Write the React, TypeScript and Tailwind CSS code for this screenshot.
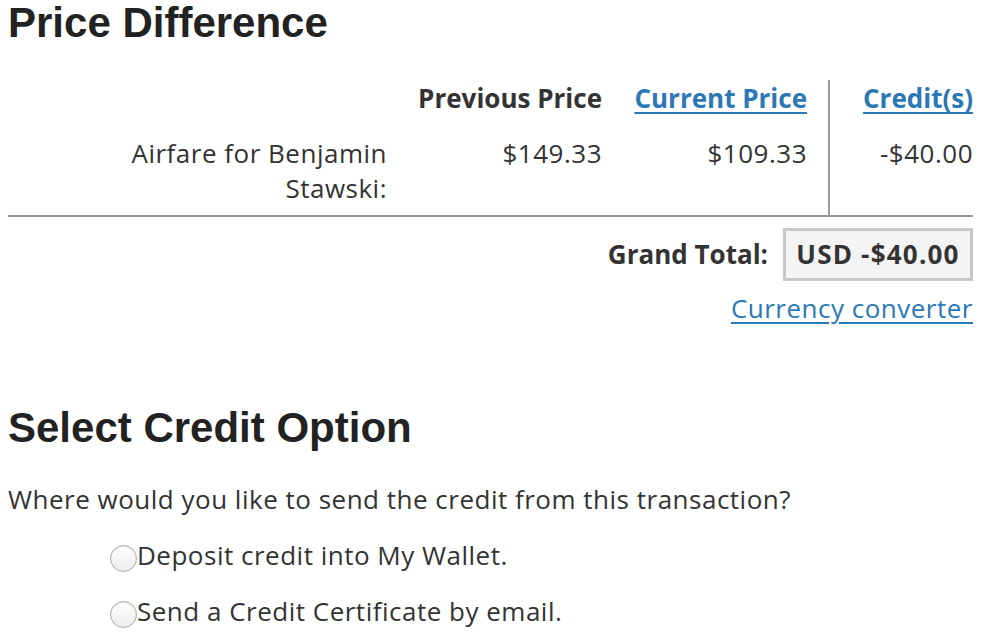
import React from "react";

const body = "font-['Open_Sans','Noto_Sans',sans-serif]";
const heading = "font-['Liberation_Sans',Arial,sans-serif] font-bold text-[42px] leading-[46px] text-[#222]";
const link = "text-[#2b78b6] underline underline-offset-[4px] decoration-[2px]";
const reg = "tracking-[0.5px]";

function RadioOption({ label }: { label: string }) {
  return (
    <label className="flex items-center pl-[102px] h-[56px]">
      <span className="w-[27px] h-[27px] rounded-full border border-[#a8a8a8] bg-gradient-to-b from-white to-[#ededed] shadow-[inset_0_1px_2px_rgba(0,0,0,0.1)] shrink-0 mt-[6px]" />
      <span className={`text-[26px] leading-[35px] text-[#333] ${reg}`}>{label}</span>
    </label>
  );
}

function PriceTable() {
  return (
    <div className="text-[26px] leading-[35px] text-[#333]">
      <div className="flex">
        <div className="w-[387px] pt-[1px] pb-[20px]" />
        <div className="w-[215px] pr-[8px] pt-[1px] pb-[20px] text-right font-bold">
          Previous Price
        </div>
        <div className="w-[218px] pr-[21px] pt-[1px] pb-[20px] text-right font-bold">
          <a className={link}>Current Price</a>
        </div>
        <div className="flex-1 border-l-2 border-[#999] pt-[1px] pb-[20px] text-right font-bold">
          <a className={link}>Credit(s)</a>
        </div>
      </div>
      <div className={`flex border-b-2 border-[#999] ${reg}`}>
        <div className="w-[387px] pl-[110px] pr-[8px] pb-[9px] text-right">
          Airfare for Benjamin Stawski:
        </div>
        <div className="w-[215px] pr-[8px] text-right">$149.33</div>
        <div className="w-[218px] pr-[21px] text-right">$109.33</div>
        <div className="flex-1 border-l-2 border-[#999] text-right">-$40.00</div>
      </div>
      <div className="flex justify-end items-center gap-[15px] mt-[11px]">
        <span className="font-bold">Grand Total:</span>
        <span className="w-[190px] border-[3px] border-[#c8c8c8] bg-[#f4f4f4] font-bold tracking-[1.2px] text-center py-[6px]">
          USD -$40.00
        </span>
      </div>
      <div className="flex justify-end mt-[10px]">
        <a className={`${link} ${reg}`}>Currency converter</a>
      </div>
    </div>
  );
}

export default function App() {
  return (
    <div className={`${body} bg-white w-[984px] h-[632px] overflow-hidden pl-[8px] pr-[11px]`}>
      <h1 className={`${heading} pt-[0px]`}>Price Difference</h1>
      <div className="mt-[34px]">
        <PriceTable />
      </div>
      <h2 className={`${heading} mt-[79px]`}>Select Credit Option</h2>
      <p className={`text-[26px] leading-[35px] text-[#333] mt-[31px] ${reg}`}>
        Where would you like to send the credit from this transaction?
      </p>
      <div className="mt-[10px]">
        <RadioOption label="Deposit credit into My Wallet." />
        <RadioOption label="Send a Credit Certificate by email." />
      </div>
    </div>
  );
}
